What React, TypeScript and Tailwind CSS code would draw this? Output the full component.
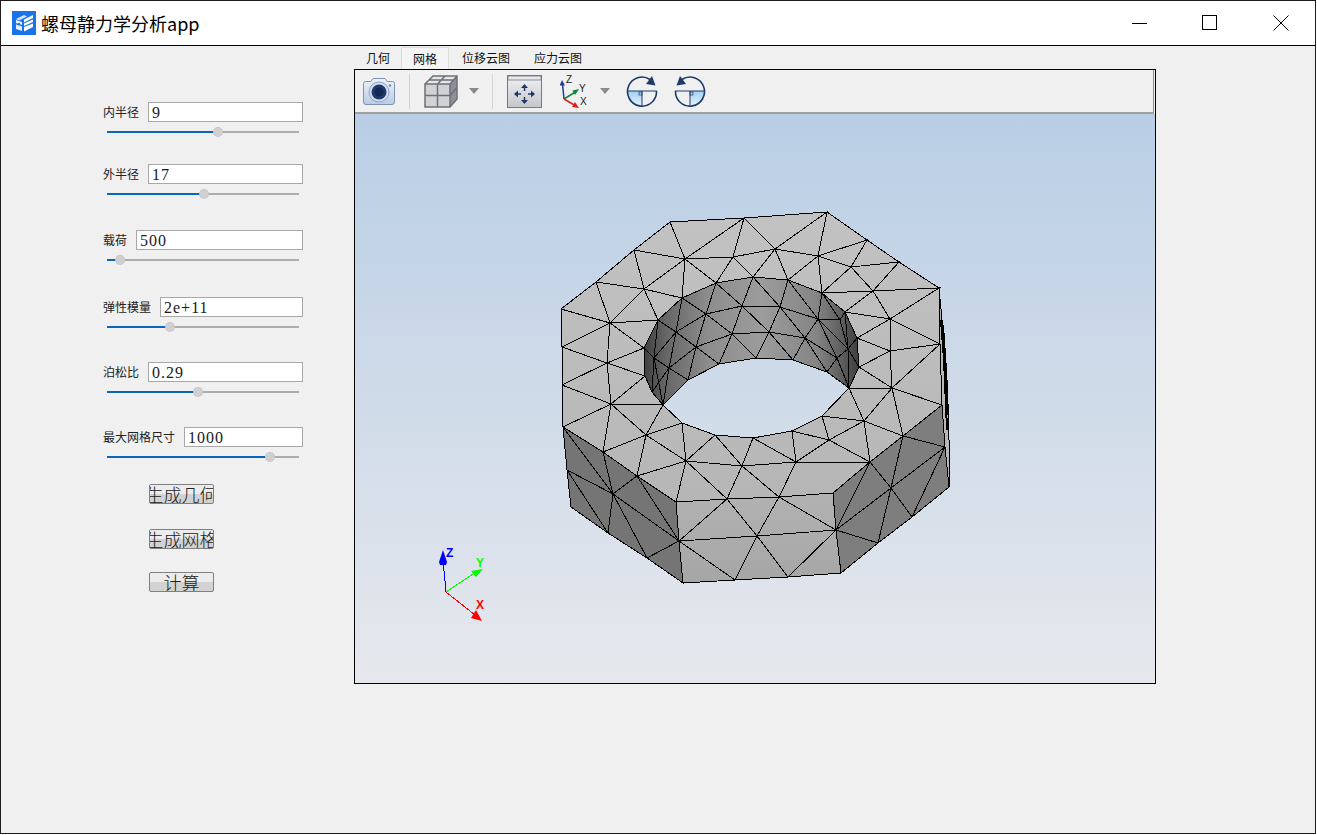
import React from "react";

const cjk = { fontFamily: '"Noto Sans CJK SC", "Noto Sans", sans-serif' };

const params = [
    { label: "内半径", value: "9", percent: 58, top: "mt-[56px]" },
    { label: "外半径", value: "17", percent: 50.5, top: "mt-[22px]" },
    { label: "载荷", value: "500", percent: 7, top: "mt-[26px]" },
    { label: "弹性模量", value: "2e+11", percent: 33, top: "mt-[27px]" },
    { label: "泊松比", value: "0.29", percent: 47.5, top: "mt-[25px]" },
    { label: "最大网格尺寸", value: "1000", percent: 85, top: "mt-[25px]" },
];

const buttons = [
    { label: "生成几何", top: "mt-[17px]" },
    { label: "生成网格", top: "mt-[25px]" },
    { label: "计算", top: "mt-[23px]" },
];

const tabs = ["几何", "网格", "位移云图", "应力云图"];

// everything below is in page coordinates (the svg viewBox starts at 355,114)
const topFace =
    "M561 309L596 282L634 250L670 222L744 218L827 212L867 240L899 262L939 288L940 344L942 405L903 436L870 462L833 493L779 497L727 499L676 502L637 476L603 452L563 427L562 385L562 347Z" +
    "M644 348L658 320L682 298L716 283L753 277L788 280L822 293L845 312L857 338L859 367L849 388L822 416L792 431L753 438L715 435L682 423L663 405L652 392L645 376Z";
const wall =
    "M644 348L658 320L682 298L716 283L753 277L788 280L822 293L845 312L857 338L859 367L849 388L827 372L793 360L756 358L719 364L688 380L663 405L652 392L645 376Z";
const leftSide = "M563 427L603 452L637 476L676 502L679 541L683 583L647 558L608 533L571 507L567 470Z";
const rightSide = "M833 493L870 462L903 436L942 405L945 447L949 487L912 517L878 543L841 573L836 530Z";
const front = "M676 502L727 499L779 497L833 493L836 530L841 573L788 577L735 580L683 583L679 541Z";
const sliver = "M939 288L940 344L942 405L945 447L949 487L949 440L947 380L943 330Z";

const edges = [
    // top face, back half
    "M670 222L685 259L744 218M634 250L685 259M634 250L644 289L596 282M685 259L644 289M685 259L733 257L744 218",
    "M685 259L716 283M685 259L682 298M733 257L775 249L744 218M733 257L753 277M733 257L716 283",
    "M775 249L827 212L818 256L775 249M775 249L788 280M775 249L753 277M818 256L867 240L851 267L818 256",
    "M818 256L788 280M818 256L822 293M851 267L899 262L873 291L851 267M851 267L822 293",
    "M873 291L939 288L890 319L873 291M873 291L822 293M873 291L845 312M890 319L845 312M890 319L940 344L890 351L890 319",
    "M890 319L857 338L890 351L859 367M890 351L892 388L940 344M859 367L892 388L849 388M892 388L864 421M892 388L903 436M892 388L942 405",
    // top face, left
    "M561 309L610 323L596 282M644 289L610 323M644 289L682 298M644 289L658 320M610 323L658 320M610 323L644 348",
    "M610 323L562 347L607 363L610 323M607 363L644 348M607 363L645 376M607 363L562 385L611 404L607 363",
    "M611 404L645 376M611 404L663 405M611 404L563 427M611 404L603 452L646 435L611 404M646 435L663 405M646 435L682 423",
    // top face, front half
    "M646 435L686 461L637 476L646 435M603 452L637 476L676 502L686 461L682 423M686 461L715 435L742 466L686 461M686 461L727 499L742 466",
    "M742 466L753 438L796 462L742 466M742 466L779 497L796 462M753 438L715 435M796 462L792 431L829 440L796 462",
    "M829 440L822 416M829 440L864 421L822 416M829 440L870 462L796 462M870 462L833 493M864 421L870 462L903 436L864 421M864 421L849 388",
    // inner wall
    "M658 320L654 358L644 348M654 358L652 392M658 320L676 332L682 298L706 314L716 283L742 306L753 277L780 307L788 280L818 319L822 293L840 320L845 312L848 349L857 338L859 367L848 349",
    "M676 332L654 358L669 368L676 332L696 347L706 314L732 334L742 306L769 332L780 307L805 338L818 319L837 358L805 338",
    "M654 358L663 405L669 368L688 380L696 347L719 364L732 334L756 358L769 332L793 360L805 338L827 372L837 358L849 388L848 349L837 358",
    "M676 332L706 314L742 306L780 307L818 319L848 349M696 347L732 334L769 332L805 338M669 368L696 347M818 319L840 320L848 349M652 392L669 368",
    // left side
    "M563 427L613 494L603 452M637 476L613 494L679 541L637 476M567 470L613 494L608 533L567 470M613 494L647 558L679 541",
    // front
    "M679 541L757 536L836 530M727 499L679 541L735 580L757 536L727 499M779 497L757 536L788 577L836 530L779 497",
    // right side
    "M836 530L870 462L891 488L836 530L878 543L891 488L903 436M891 488L912 517L945 447L891 488M903 436L945 447",
];

const blackClutter = "M941 320L944 360L946 405L947 430M943 325L946 370L948 415";

const NutMesh = () => (
    <svg viewBox="355 114 800 570" className="block w-[800px] h-[570px] shrink-0">
        <defs>
            <linearGradient id="top" x1="0" y1="0" x2="0" y2="1">
                <stop offset="0" stopColor="#c2c2c2" />
                <stop offset="1" stopColor="#b6b6b6" />
            </linearGradient>
            <linearGradient id="front" x1="0" y1="0" x2="0" y2="1">
                <stop offset="0" stopColor="#b2b2b2" />
                <stop offset="1" stopColor="#a6a6a6" />
            </linearGradient>
            <linearGradient id="wall" x1="0" y1="0" x2="1" y2="0">
                <stop offset="0" stopColor="#3f3f3f" />
                <stop offset="0.1" stopColor="#666" />
                <stop offset="0.3" stopColor="#8d8d8d" />
                <stop offset="0.55" stopColor="#9c9c9c" />
                <stop offset="0.8" stopColor="#858585" />
                <stop offset="0.92" stopColor="#5e5e5e" />
                <stop offset="1" stopColor="#3c3c3c" />
            </linearGradient>
        </defs>
        <path d={wall} fill="url(#wall)" />
        <path d={topFace} fill="url(#top)" fillRule="evenodd" />
        <path d={leftSide} fill="#757575" />
        <path d={rightSide} fill="#7e7e7e" />
        <path d={front} fill="url(#front)" />
        <path d={sliver} fill="#b8b8b8" />
        <g fill="none" stroke="#000" strokeWidth="1" shapeRendering="crispEdges">
            <path d={topFace} />
            <path d={wall} />
            <path d={leftSide} />
            <path d={rightSide} />
            <path d={front} />
            <path d={sliver} />
            {edges.map((d, i) => (
                <path key={i} d={d} />
            ))}
            <path d={blackClutter} strokeWidth="2" />
        </g>

        {/* triad */}
        <g strokeWidth="1" fill="none" shapeRendering="crispEdges">
            <path d="M446 592L443 560" stroke="#0000ff" />
            <path d="M446 592L476 572" stroke="#00ff00" />
            <path d="M446 592L475 615" stroke="#ff0000" />
        </g>
        <path d="M443 550L447 562L446 565L440 565L439 562Z" fill="#0000ff" />
        <path d="M483 569L476 577L471 571Z" fill="#00ff00" />
        <path d="M482 621L471 618L476 610Z" fill="#ff0000" />
        <g fontFamily='"Liberation Sans", sans-serif' fontSize="12" fontWeight="700">
            <text x="446" y="557" fill="#0000ff">Z</text>
            <text x="476" y="567" fill="#00ff00">Y</text>
            <text x="476" y="609" fill="#ff0000">X</text>
        </g>
    </svg>
);

const Logo = () => (
    <svg width="24" height="24" viewBox="0 0 24 24" className="ml-[11px] shrink-0">
        <rect width="24" height="24" fill="#1a73e8" />
        <path d="M4 8L12 4L15 5.5L7 9.5Z" fill="#cfe2fb" />
        <path d="M12 8.5L21 4V7L12 11.5Z" fill="#fff" />
        <path d="M4 9L10 11V14L4 12Z" fill="#e6f0fd" />
        <path d="M12 12.5L21 8.5V11L12 15Z" fill="#fff" />
        <path d="M4 13.5L10 15.5V20L4 18Z" fill="#e6f0fd" />
        <path d="M12 16L21 12.5V16L12 20.5Z" fill="#fff" />
        <rect x="6" y="12" width="2" height="1.6" fill="#1a73e8" />
    </svg>
);

const Camera = () => (
    <svg width="36" height="30" viewBox="0 0 36 30" className="shrink-0">
        <defs>
            <linearGradient id="cam" x1="0" y1="0" x2="0" y2="1">
                <stop offset="0" stopColor="#eef3fa" />
                <stop offset="1" stopColor="#b9cbe4" />
            </linearGradient>
        </defs>
        <path d="M2.5 7.5Q2.5 5.5 4.5 5.5H10L12 2.5H24L26 5.5H31.5Q33.5 5.5 33.5 7.5V26Q33.5 28.5 31 28.5H5Q2.5 28.5 2.5 26Z" fill="url(#cam)" stroke="#7d93b5" />
        <circle cx="18" cy="16" r="10" fill="#d3deee" stroke="#8fa3c2" />
        <circle cx="18" cy="16" r="7.5" fill="#1f3a6e" />
        <circle cx="18" cy="16" r="4.5" fill="#142a56" />
        <circle cx="29" cy="9.5" r="1.2" fill="#6f86aa" />
    </svg>
);

const MeshCube = () => (
    <svg width="34" height="33" viewBox="0 0 34 33" className="shrink-0">
        <path d="M1 9L9 1H33V24L26 32H1Z" fill="#d2d2d6" />
        <path d="M1 9L9 1H33L26 9Z" fill="#e6e6e8" />
        <path d="M26 9L33 1V24L26 32Z" fill="#8e9098" />
        <path d="M1 9H26V32H1ZM1 9L9 1H33V24L26 32M26 9L33 1M13.5 9V32M1 20.5H26M13.5 9L21 1M5 5H29.5M26 20.5L33 12.5" fill="none" stroke="#6d7078" strokeWidth="1.5" />
    </svg>
);

const Caret = () => (
    <svg width="10" height="6" viewBox="0 0 10 6" className="shrink-0">
        <path d="M0 0H10L5 6Z" fill="#8a8a8a" />
    </svg>
);

const Separator = () => <div className="w-px h-[35px] bg-[#d4d4d4] shrink-0" />;

const FitView = () => (
    <svg width="35" height="33" viewBox="0 0 35 33" className="shrink-0">
        <defs>
            <linearGradient id="fit" x1="0" y1="0" x2="0" y2="1">
                <stop offset="0" stopColor="#f2f2f4" />
                <stop offset="1" stopColor="#c4c6cc" />
            </linearGradient>
        </defs>
        <rect x="0.5" y="0.5" width="34" height="32" fill="url(#fit)" stroke="#6f7a8e" />
        <rect x="1" y="1" width="33" height="4" fill="#e8e8ea" stroke="#6f7a8e" strokeWidth="0.8" />
        <g fill="#1f3a6a">
            <path d="M17.5 9L21 13H14Z" />
            <path d="M17.5 29L14 25H21Z" />
            <path d="M7 19L11 15.5V22.5Z" />
            <path d="M28 19L24 15.5V22.5Z" />
        </g>
        <path d="M17.5 12V16M17.5 22V26M10 19H14M21 19H25" stroke="#1f3a6a" strokeWidth="1.5" />
    </svg>
);

const AxesIcon = () => (
    <svg width="32" height="34" viewBox="0 0 32 34" className="shrink-0">
        <path d="M4 25L2.5 10" stroke="#1e3f8f" strokeWidth="1.5" />
        <path d="M2 6L5 11.5H-0.5Z" fill="#1e3f8f" />
        <path d="M4 25L17 17" stroke="#0f8a3c" strokeWidth="1.5" />
        <path d="M19 15L15 21L12.5 16.5Z" fill="#0f8a3c" />
        <path d="M4 25L16 32" stroke="#e02020" strokeWidth="1.5" />
        <path d="M19 34L12 33L15 28Z" fill="#e02020" />
        <g fontFamily='"Liberation Sans", sans-serif' fontSize="10" fill="#222">
            <text x="6" y="9">Z</text>
            <text x="19" y="18">Y</text>
            <text x="20" y="31">X</text>
        </g>
    </svg>
);

const RotateIcon = ({ mirrored, id }: { mirrored?: boolean; id: string }) => (
    <svg width="32" height="32" viewBox="0 0 32 32" className="shrink-0">
        <defs>
            <linearGradient id={id} x1="0" y1="0" x2="0" y2="1">
                <stop offset="0" stopColor="#9fd0f2" />
                <stop offset="1" stopColor="#e2f1fb" />
            </linearGradient>
        </defs>
        <g transform={mirrored ? "matrix(-1 0 0 1 32 0)" : undefined}>
            <path d="M16 16H1.5A14.5 14.5 0 0 0 16 30.5Z" fill={`url(#${id})`} />
            <path d="M1 16H31M16 16V30" stroke="#1f3a6a" strokeWidth="1" />
            <path d="M24 4.5A14.5 14.5 0 1 0 30.5 16" fill="none" stroke="#1f3a6a" strokeWidth="1.6" />
            <path d="M29.5 10.5L20 9L26 1Z" fill="#1f3a6a" />
            <rect x="13" y="17" width="3" height="3" fill="none" stroke="#1f3a6a" strokeWidth="0.7" />
        </g>
    </svg>
);

const Param = ({ label, value, percent, top }: typeof params[number]) => (
    <div className={`${top} w-[200px] h-[40px] shrink-0`}>
        <div className="flex items-center gap-[9px] h-[20px]">
            <span className="text-[12px] leading-none text-[#222] whitespace-nowrap">{label}</span>
            <div
                className="flex-1 h-[20px] bg-white border border-[#a8a8a8] pl-[3px] text-[16px] leading-[19px] tracking-[1px] text-[#1a1a1a]"
                style={{ fontFamily: '"Liberation Serif", serif' }}
            >
                {value}
            </div>
        </div>
        <div className="relative ml-[4px] w-[192px] h-[20px] flex items-center">
            <div className="w-full h-[2px] bg-[#acacac]">
                <div className="h-full bg-[#0a66bb]" style={{ width: `${percent}%` }} />
            </div>
            <div
                className="absolute top-[5px] w-[10px] h-[10px] -ml-[5px] rounded-full bg-[#d0d0d0] border border-dotted border-[#bdbdbd]"
                style={{ left: `${percent}%` }}
            />
        </div>
    </div>
);

const App = () => {
    return (
        <div className="w-[1317px] h-[835px] bg-white overflow-hidden" style={cjk}>
            <div className="w-[1316px] h-[834px] border border-[#1c1c1c] flex flex-col bg-[#f0f0f0]">
                <div className="h-[45px] shrink-0 bg-white border-b border-black flex items-center">
                    <Logo />
                    <span className="ml-[5px] text-[18px] leading-none text-black">螺母静力学分析app</span>
                    <div className="ml-auto flex items-center">
                        <svg width="16" height="16" viewBox="0 0 16 16" className="mr-[54px]">
                            <path d="M0 8.5H15" stroke="#000" />
                        </svg>
                        <svg width="16" height="16" viewBox="0 0 16 16" className="mr-[55px]">
                            <rect x="0.5" y="0.5" width="14" height="14" fill="none" stroke="#000" />
                        </svg>
                        <svg width="16" height="16" viewBox="0 0 16 16" className="mr-[26px]">
                            <path d="M0.5 0.5L15.5 15.5M15.5 0.5L0.5 15.5" stroke="#000" />
                        </svg>
                    </div>
                </div>

                <div className="flex-1 flex min-h-0 pl-[1px]">
                    <div className="w-[352px] shrink-0 flex flex-col pl-[101px]">
                        {params.map((p) => (
                            <Param key={p.label} {...p} />
                        ))}
                        {buttons.map((b) => (
                            <button
                                key={b.label}
                                className={`${b.top} ml-[46px] w-[65px] h-[20px] shrink-0 overflow-hidden flex justify-center items-center whitespace-nowrap rounded-[2px] border border-[#7f7f7f] bg-[linear-gradient(#ececec_50%,#d2d2d2_50%)] text-[18px] font-light leading-none text-[#222]`}
                            >
                                {b.label}
                            </button>
                        ))}
                    </div>

                    <div className="flex flex-col w-[802px] shrink-0">
                        <div className="flex h-[23px] items-end text-[12px] leading-none text-[#111] pt-[1px]">
                            {tabs.map((t, i) => (
                                <div
                                    key={t}
                                    className={
                                        i === 1
                                            ? "h-[22px] px-[11px] flex items-center bg-[#f4f4f4] border border-b-0 border-[#dcdcdc] ml-[-1px] mr-[1px]"
                                            : "h-[22px] px-[12px] flex items-center"
                                    }
                                >
                                    {t}
                                </div>
                            ))}
                        </div>
                        <div className="w-[802px] h-[615px] border border-black flex flex-col bg-[#f0f0f0]">
                            <div className="h-[44px] shrink-0 flex items-center border-b-2 border-[#a0a0a0] border-r border-r-[#8c8c8c] mr-[1px] pl-[6px]">
                                <Camera />
                                <div className="ml-[12px]"><Separator /></div>
                                <div className="ml-[14px]"><MeshCube /></div>
                                <div className="ml-[11px]"><Caret /></div>
                                <div className="ml-[13px]"><Separator /></div>
                                <div className="ml-[14px]"><FitView /></div>
                                <div className="ml-[18px]"><AxesIcon /></div>
                                <div className="ml-[8px]"><Caret /></div>
                                <div className="ml-[16px]"><RotateIcon id="rotA" /></div>
                                <div className="ml-[16px]"><RotateIcon id="rotB" mirrored /></div>
                            </div>
                            <div className="flex-1 min-h-0 overflow-hidden bg-[linear-gradient(#b9cee5,#e6e8ed)]">
                                <NutMesh />
                            </div>
                        </div>
                    </div>
                </div>
            </div>
        </div>
    );
};

export default App;
